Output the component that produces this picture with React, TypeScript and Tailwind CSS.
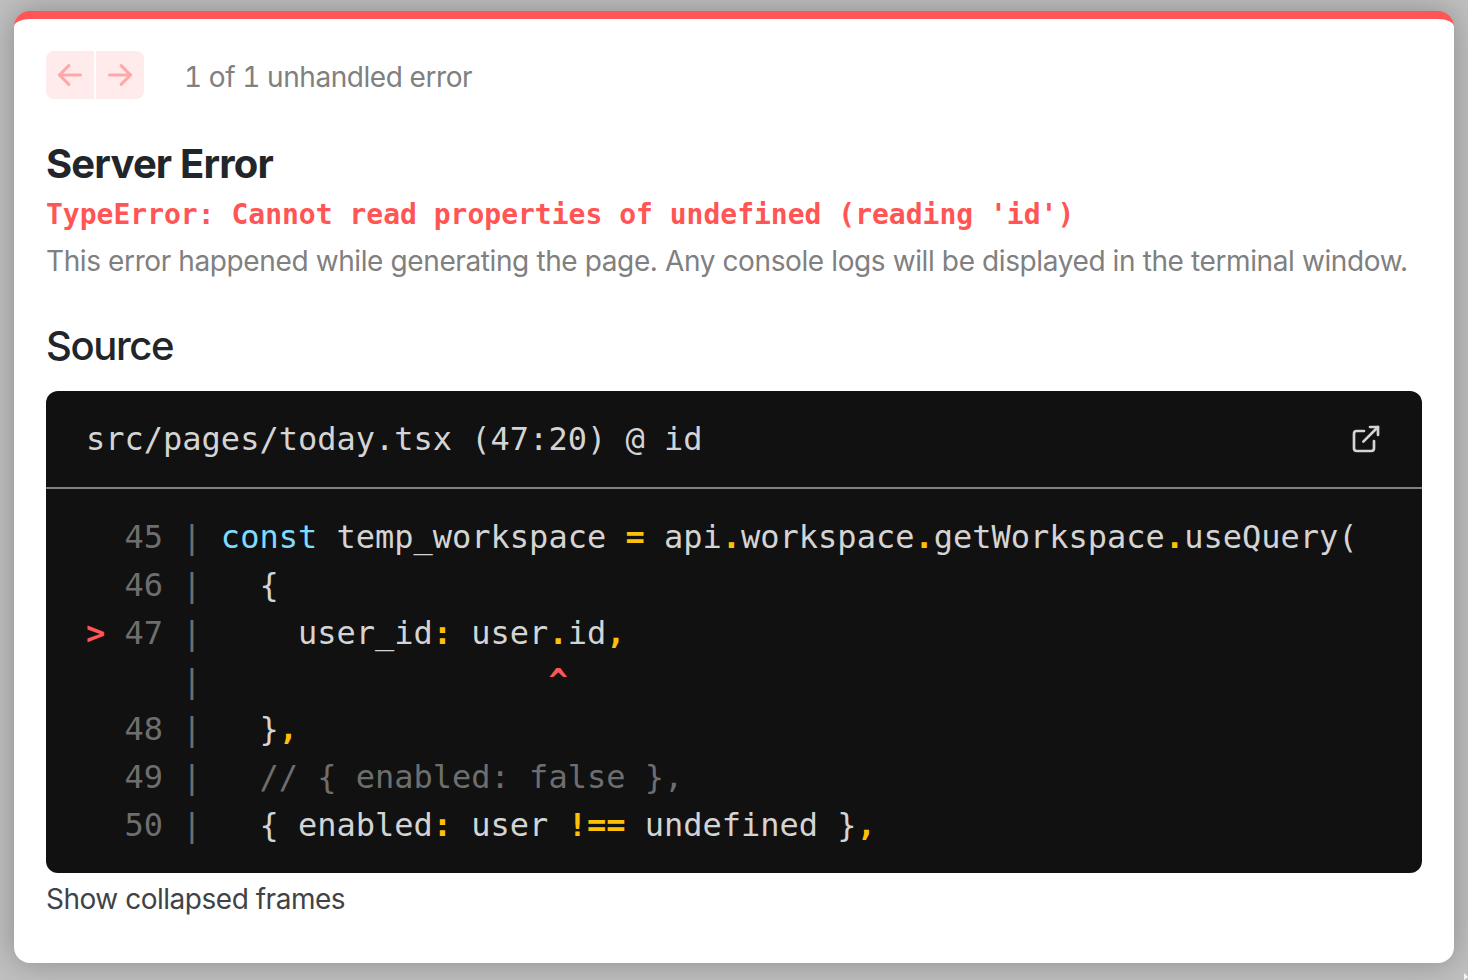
import React from "react";

const Y = ({ children }: { children: React.ReactNode }) => (
  <span className="text-[#ffc107] font-bold">{children}</span>
);
const N = ({ children }: { children: React.ReactNode }) => (
  <span className="text-[#6e6e6e]">{children}</span>
);
const P = () => <span className="text-[#6e6e6e]">|</span>;
const R = ({ children }: { children: React.ReactNode }) => (
  <span className="text-[#ff5555] font-bold">{children}</span>
);

function Arrow({ left }: { left?: boolean }) {
  return (
    <svg width="28" height="28" viewBox="0 0 24 24" fill="none" stroke="#ffa8a8" strokeWidth="2.7" strokeLinecap="round" strokeLinejoin="round" className={left ? "" : "rotate-180"}>
      <path d="M21 12H3" />
      <path d="M11 4l-8 8 8 8" />
    </svg>
  );
}

export default function App() {
  return (
    <div className="relative h-[980px] w-full overflow-hidden bg-[#c0c0c0] pt-[11px] px-[14px] [font-family:Inter,sans-serif]">
      <div className="h-[952px] rounded-2xl bg-white border-t-8 border-[#ff5555] shadow-[0_0_32px_rgba(0,0,0,0.28)] px-8 pt-8">
        <div className="flex items-center h-12">
          <div className="flex gap-0.5 w-[98px]">
            <div className="w-12 h-12 rounded-l-lg bg-[#ffebeb] flex items-center justify-center"><Arrow left /></div>
            <div className="w-12 h-12 rounded-r-lg bg-[#ffebeb] flex items-center justify-center"><Arrow /></div>
          </div>
          <div className="ml-[40px] text-[28px] leading-[56px] text-[#808080] mt-1 tabular-nums tracking-[-0.43px]">1 of 1 unhandled error</div>
        </div>
        <h1 className="mt-[39px] text-[40px] leading-[52px] font-bold text-[#22262b] tracking-[-0.83px]">Server Error</h1>
        <div className="[font-family:'DejaVu_Sans_Mono',monospace] font-bold text-[28px] leading-[36px] text-[#ff5555] mt-[7px]">TypeError: Cannot read properties of undefined (reading 'id')</div>
        <p className="text-[28px] leading-[48px] text-[#808080] mt-[4px] whitespace-nowrap tracking-[-0.39px]">This error happened while generating the page. Any console logs will be displayed in the terminal window.</p>
        <h2 className="mt-[37px] text-[40px] leading-[48px] font-medium text-[#22262b] tracking-[-1.35px]">Source</h2>
        <div className="mt-[21px] rounded-xl bg-[#111111] [font-family:'DejaVu_Sans_Mono',monospace] text-[32px] leading-[48px] text-[#d4d4d4]">
          <div className="flex items-center justify-between h-[98px] border-b-2 border-[#808080] px-10 pb-0">
            <span>src/pages/today.tsx (47:20) @ id</span>
            <svg width="32" height="32" viewBox="0 0 24 24" fill="none" stroke="#d4d4d4" strokeWidth="2" strokeLinecap="round" strokeLinejoin="round">
              <path d="M18 13.5V19a2 2 0 0 1-2 2H5a2 2 0 0 1-2-2V8a2 2 0 0 1 2-2h5.5" />
              <path d="M15 3h6v6" />
              <path d="M10 14L21 3" />
            </svg>
          </div>
          <pre className="[font-family:inherit] px-10 py-6 text-[32px] leading-[48px] whitespace-pre">
            <div>{"  "}<N>45</N> <P /> <span className="text-[#7fdbff]">const</span> temp_workspace <Y>=</Y> api<Y>.</Y>workspace<Y>.</Y>getWorkspace<Y>.</Y>useQuery(</div>
            <div>{"  "}<N>46</N> <P />   {"{"}</div>
            <div><R>{">"}</R> <N>47</N> <P />     user_id<Y>:</Y> user<Y>.</Y>id<Y>,</Y></div>
            <div>{"     "}<P />{"                  "}<R>^</R></div>
            <div>{"  "}<N>48</N> <P />   {"}"}<Y>,</Y></div>
            <div>{"  "}<N>49</N> <P />   <span className="text-[#6e6e6e]">{"// { enabled: false },"}</span></div>
            <div>{"  "}<N>50</N> <P />   {"{"} enabled<Y>:</Y> user <Y>!==</Y> undefined {"}"}<Y>,</Y></div>
          </pre>
        </div>
        <div className="mt-[6px] text-[28px] leading-[40px] text-[#3f4347] tracking-[-0.48px]">Show collapsed frames</div>
      </div>
      <svg width="4" height="7" viewBox="0 0 4 7" className="absolute left-[1464px] top-[973px]">
        <path d="M0 0L4 4L0 7Z" fill="#f4f4f4" />
      </svg>
    </div>
  );
}
